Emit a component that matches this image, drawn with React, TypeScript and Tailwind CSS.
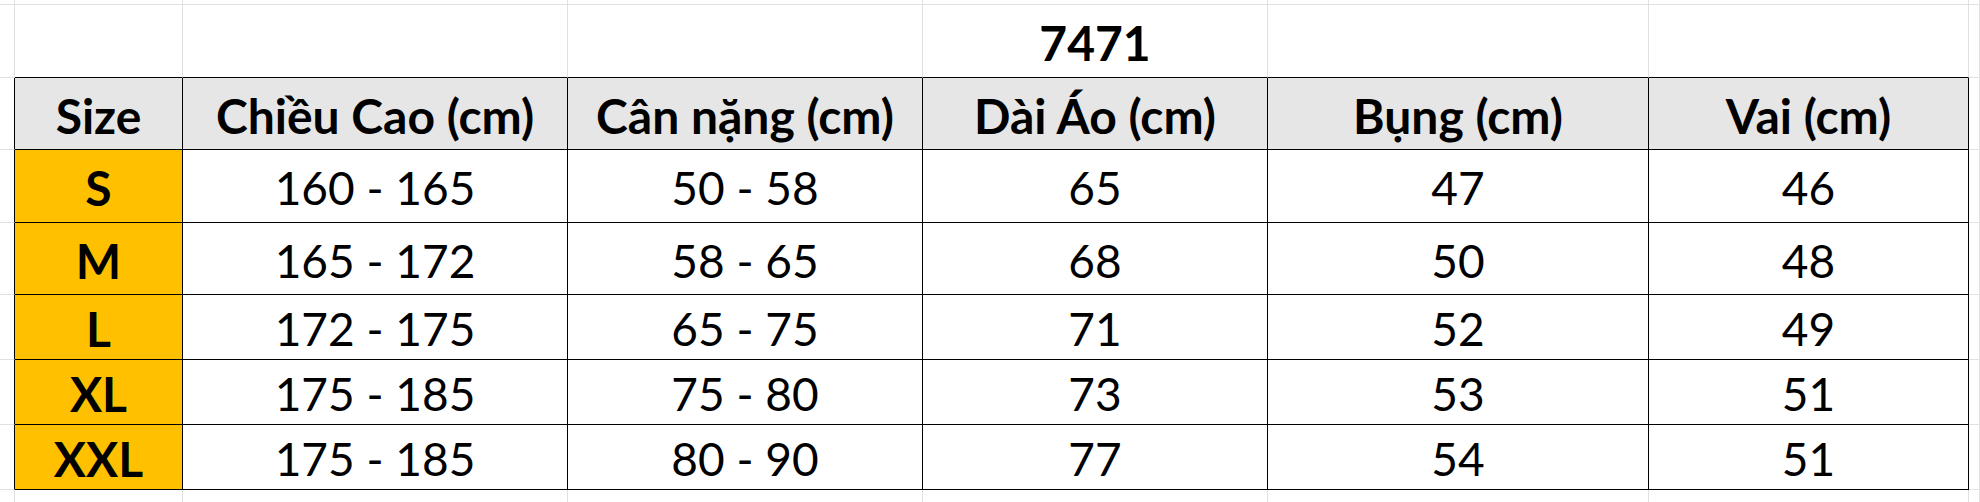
import React from 'react';

const COLS = ['15px', '168px', '385px', '355px', '345px', '381px', '320px', '1fr'];
const ROW_H = ['h-[2px]', 'h-[73px]', 'h-[72px]', 'h-[73px]', 'h-[72px]', 'h-[65px]', 'h-[65px]', 'h-[65px]', 'h-[15px]'];

const HEADERS = ['Size', 'Chiều Cao (cm)', 'Cân nặng (cm)', 'Dài Áo (cm)', 'Bụng (cm)', 'Vai (cm)'];

const SIZES = [
  ['S', '160 - 165', '50 - 58', '65', '47', '46'],
  ['M', '165 - 172', '58 - 65', '68', '50', '48'],
  ['L', '172 - 175', '65 - 75', '71', '52', '49'],
  ['XL', '175 - 185', '75 - 80', '73', '53', '51'],
  ['XXL', '175 - 185', '80 - 90', '77', '54', '51'],
];

function cellContent(r: number, c: number) {
  if (r === 1 && c === 4) return { text: '7471', bold: true };
  if (r === 2 && c >= 1 && c <= 6) return { text: HEADERS[c - 1], bold: true };
  if (r >= 3 && r <= 7 && c >= 1 && c <= 6) {
    return { text: SIZES[r - 3][c - 1], bold: c === 1 };
  }
  return null;
}

export default function App() {
  const rows = ROW_H.map((_, r) => r);
  return (
    <div
      className="w-[1980px] h-[502px] bg-white overflow-hidden text-black"
      style={{ fontFamily: 'Lato, "Noto Sans", "Liberation Sans", sans-serif' }}
    >
      <div className="grid" style={{ gridTemplateColumns: COLS.join(' ') }}>
        {rows.map((r) =>
          COLS.map((_, c) => {
            const inTable = r >= 2 && r <= 7;
            const rightBlack = inTable && c <= 6;
            const bottomBlack = r >= 1 && r <= 7 && c >= 1 && c <= 6;
            const content = cellContent(r, c);
            const bg =
              r === 2 && c >= 1 && c <= 6
                ? 'bg-[#e7e6e6]'
                : r >= 3 && r <= 7 && c === 1
                ? 'bg-[#ffc000]'
                : 'bg-white';
            return (
              <div
                key={`${r}-${c}`}
                className={`${ROW_H[r]} ${bg} border-r border-b ${
                  rightBlack ? 'border-r-black' : 'border-r-[#e1e1e1]'
                } ${bottomBlack ? 'border-b-black' : 'border-b-[#e1e1e1]'} flex justify-center ${
                  r === 1 ? 'items-end pb-[10px]' : 'items-center pt-[4px]'
                }`}
              >
                {content && (
                  <span
                    className={`leading-none whitespace-nowrap ${
                      content.bold ? 'font-bold text-[48px]' : 'font-normal text-[46px]'
                    }`}
                  >
                    {content.text}
                  </span>
                )}
              </div>
            );
          })
        )}
      </div>
    </div>
  );
}
